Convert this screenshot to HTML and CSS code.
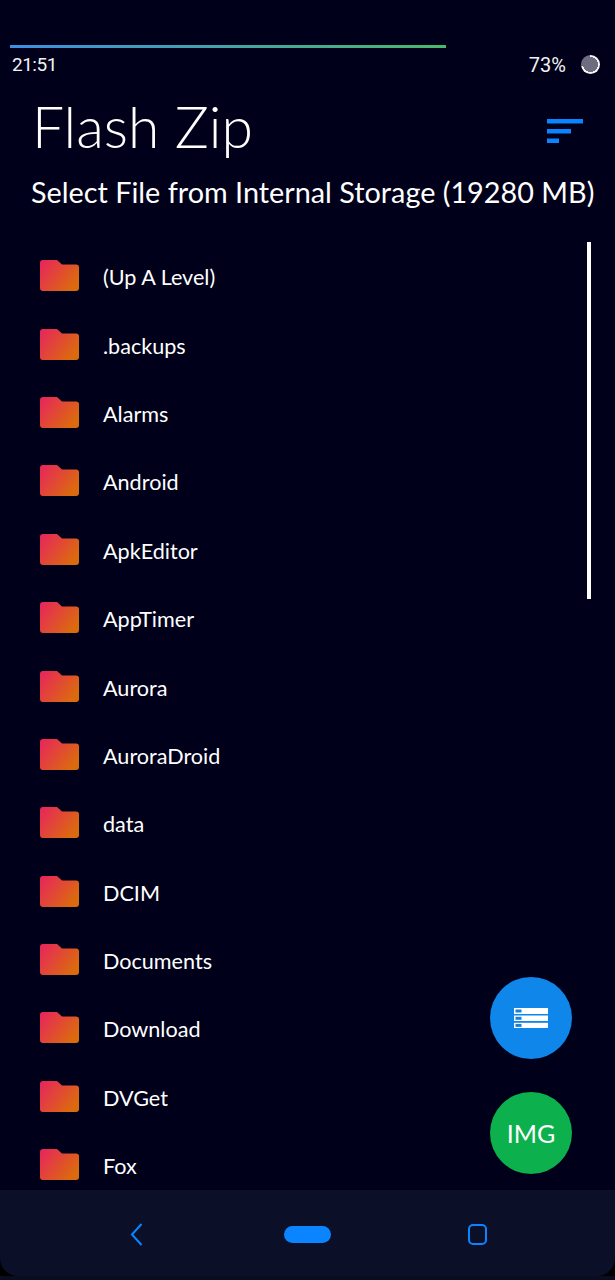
FILE: index.html
```html
<!DOCTYPE html>
<html lang="en">
<head>
<meta charset="utf-8">
<title>Flash Zip</title>
<link rel="stylesheet" href="styles.css">
</head>
<body>
<div class="screen">
  <div class="top-gap"></div>
  <div class="progress"></div>
  <div class="status">
    <span class="time">21:51</span>
    <div class="status-right">
      <span>73%</span>
      <span class="battery"></span>
    </div>
  </div>
  <header class="header">
    <h1 class="title">Flash Zip</h1>
    <svg class="sort" width="36" height="24" viewBox="0 0 36 24"><rect width="36" height="4.500" fill="#0a84ff"/><rect y="10" width="24" height="4.500" fill="#0a84ff"/><rect y="19.500" width="12" height="4.500" fill="#0a84ff"/></svg>
  </header>
  <h2 class="subtitle">Select File from Internal Storage (19280 MB)</h2>
  <main class="content">
    <svg width="0" height="0" class="defs"><defs><linearGradient id="fg" x1="0" y1="0" x2="1" y2="0.6"><stop offset="0" stop-color="#e8235f"/><stop offset="1" stop-color="#db6a0e"/></linearGradient></defs></svg>
    <ul class="list">
      <li class="row"><svg class="folder" viewBox="0 0 39 31"><path d="M3 0h14l5 4.500h14a3 3 0 0 1 3 3V28a3 3 0 0 1-3 3H3a3 3 0 0 1-3-3V3a3 3 0 0 1 3-3z" fill="url(#fg)"/></svg>(Up A Level)</li>
      <li class="row"><svg class="folder" viewBox="0 0 39 31"><path d="M3 0h14l5 4.500h14a3 3 0 0 1 3 3V28a3 3 0 0 1-3 3H3a3 3 0 0 1-3-3V3a3 3 0 0 1 3-3z" fill="url(#fg)"/></svg>.backups</li>
      <li class="row"><svg class="folder" viewBox="0 0 39 31"><path d="M3 0h14l5 4.500h14a3 3 0 0 1 3 3V28a3 3 0 0 1-3 3H3a3 3 0 0 1-3-3V3a3 3 0 0 1 3-3z" fill="url(#fg)"/></svg>Alarms</li>
      <li class="row"><svg class="folder" viewBox="0 0 39 31"><path d="M3 0h14l5 4.500h14a3 3 0 0 1 3 3V28a3 3 0 0 1-3 3H3a3 3 0 0 1-3-3V3a3 3 0 0 1 3-3z" fill="url(#fg)"/></svg>Android</li>
      <li class="row"><svg class="folder" viewBox="0 0 39 31"><path d="M3 0h14l5 4.500h14a3 3 0 0 1 3 3V28a3 3 0 0 1-3 3H3a3 3 0 0 1-3-3V3a3 3 0 0 1 3-3z" fill="url(#fg)"/></svg>ApkEditor</li>
      <li class="row"><svg class="folder" viewBox="0 0 39 31"><path d="M3 0h14l5 4.500h14a3 3 0 0 1 3 3V28a3 3 0 0 1-3 3H3a3 3 0 0 1-3-3V3a3 3 0 0 1 3-3z" fill="url(#fg)"/></svg>AppTimer</li>
      <li class="row"><svg class="folder" viewBox="0 0 39 31"><path d="M3 0h14l5 4.500h14a3 3 0 0 1 3 3V28a3 3 0 0 1-3 3H3a3 3 0 0 1-3-3V3a3 3 0 0 1 3-3z" fill="url(#fg)"/></svg>Aurora</li>
      <li class="row"><svg class="folder" viewBox="0 0 39 31"><path d="M3 0h14l5 4.500h14a3 3 0 0 1 3 3V28a3 3 0 0 1-3 3H3a3 3 0 0 1-3-3V3a3 3 0 0 1 3-3z" fill="url(#fg)"/></svg>AuroraDroid</li>
      <li class="row"><svg class="folder" viewBox="0 0 39 31"><path d="M3 0h14l5 4.500h14a3 3 0 0 1 3 3V28a3 3 0 0 1-3 3H3a3 3 0 0 1-3-3V3a3 3 0 0 1 3-3z" fill="url(#fg)"/></svg>data</li>
      <li class="row"><svg class="folder" viewBox="0 0 39 31"><path d="M3 0h14l5 4.500h14a3 3 0 0 1 3 3V28a3 3 0 0 1-3 3H3a3 3 0 0 1-3-3V3a3 3 0 0 1 3-3z" fill="url(#fg)"/></svg>DCIM</li>
      <li class="row"><svg class="folder" viewBox="0 0 39 31"><path d="M3 0h14l5 4.500h14a3 3 0 0 1 3 3V28a3 3 0 0 1-3 3H3a3 3 0 0 1-3-3V3a3 3 0 0 1 3-3z" fill="url(#fg)"/></svg>Documents</li>
      <li class="row"><svg class="folder" viewBox="0 0 39 31"><path d="M3 0h14l5 4.500h14a3 3 0 0 1 3 3V28a3 3 0 0 1-3 3H3a3 3 0 0 1-3-3V3a3 3 0 0 1 3-3z" fill="url(#fg)"/></svg>Download</li>
      <li class="row"><svg class="folder" viewBox="0 0 39 31"><path d="M3 0h14l5 4.500h14a3 3 0 0 1 3 3V28a3 3 0 0 1-3 3H3a3 3 0 0 1-3-3V3a3 3 0 0 1 3-3z" fill="url(#fg)"/></svg>DVGet</li>
      <li class="row"><svg class="folder" viewBox="0 0 39 31"><path d="M3 0h14l5 4.500h14a3 3 0 0 1 3 3V28a3 3 0 0 1-3 3H3a3 3 0 0 1-3-3V3a3 3 0 0 1 3-3z" fill="url(#fg)"/></svg>Fox</li>
    </ul>
    <div class="scrollbar"></div>
    <button class="fab fab-blue">
      <svg width="34" height="20" viewBox="0 0 34 20"><rect width="34" height="6" fill="#fff"/><rect y="7.500" width="34" height="5.500" fill="#fff"/><rect y="14.800" width="34" height="5.200" fill="#fff"/><rect x="1.500" y="1.500" width="6" height="3" fill="#1a7fd8"/><rect x="1.500" y="8.800" width="6" height="3" fill="#1a7fd8"/><rect x="1.500" y="15.900" width="6" height="3" fill="#1a7fd8"/></svg>
    </button>
    <button class="fab fab-green">IMG</button>
  </main>
  <nav class="nav">
    <svg class="nav-back" width="13" height="23" viewBox="0 0 13 23"><path d="M11.500 1 2 11.500 11.500 22" fill="none" stroke="#0a84ff" stroke-width="2"/></svg>
    <span class="nav-home"></span>
    <span class="nav-recent"></span>
  </nav>
</div>
</body>
</html>
```
FILE: styles.css
```css
* { box-sizing: border-box; }
html, body { margin: 0; padding: 0; background: #000; }
body {
  width: 615px;
  height: 1280px;
  overflow: hidden;
  font-family: "Lato", "Liberation Sans", sans-serif;
  color: #fff;
  background: linear-gradient(#000 1276px, #0a0c20 1276px);
}
.screen {
  width: 615px;
  height: 1276px;
  background: #00001a;
  display: flex;
  flex-direction: column;
  overflow: hidden;
  border-radius: 0 0 18px 18px;
}
.top-gap { height: 45px; flex: none; }
.progress {
  width: 436px;
  height: 3px;
  margin-left: 10px;
  flex: none;
  background: linear-gradient(90deg, #3f8fe0, #4cb86a);
}
.status {
  height: 33px;
  padding: 0 15px 0 12px;
  flex: none;
  display: flex;
  align-items: center;
  justify-content: space-between;
  font-family: "Roboto", sans-serif;
  font-size: 20px;
  color: #f2f2f2;
}
.time { font-size: 19px; letter-spacing: -0.5px; }
.status-right { display: flex; align-items: center; gap: 15px; }
.battery {
  width: 19px;
  height: 19px;
  border-radius: 50%;
  background:
    radial-gradient(circle closest-side, #6d6c80 78%, transparent 80%),
    conic-gradient(#f4f4f4 73%, #6d6c80 0);
}
.header {
  display: flex;
  align-items: center;
  justify-content: space-between;
  padding: 0 32px 0 32px;
  height: 90px;
  flex: none;
}
.title {
  margin: 0;
  font-size: 57px;
  font-weight: 300;
  line-height: 1;
}
.sort { margin-top: 10px; }
.subtitle {
  margin: 3px 0 0;
  padding-left: 31px;
  font-size: 28.800px;
  font-weight: 400;
  line-height: 36px;
  white-space: nowrap;
  flex: none;
}
.content {
  position: relative;
  flex: 1;
  min-height: 0;
  overflow: hidden;
}
.defs { position: absolute; }
.list {
  list-style: none;
  margin: 0;
  padding: 33px 0 0 40px;
}
.row {
  height: 68.400px;
  display: flex;
  align-items: center;
  gap: 24px;
  font-size: 21.600px;
}
.folder { width: 39px; height: 31px; flex: none; margin-top: -3px; }
.scrollbar {
  position: absolute;
  top: 32px;
  right: 24px;
  width: 4px;
  height: 357px;
  background: #fff;
}
.fab {
  position: absolute;
  right: 43px;
  width: 82px;
  height: 82px;
  border: 0;
  border-radius: 50%;
  padding: 0;
  color: #fff;
  display: flex;
  align-items: center;
  justify-content: center;
  font-family: inherit;
  font-size: 25px;
}
.fab-blue { top: 767px; background: #0f86ea; }
.fab-green { top: 882px; background: #0cb04c; }
.nav {
  height: 86px;
  flex: none;
  background: #0c0f28;
  display: flex;
  align-items: center;
  padding-top: 2px;
}
.nav-back { margin-left: 130px; }
.nav-home {
  width: 47px;
  height: 17px;
  margin-left: 141px;
  border-radius: 9px;
  background: #0a84ff;
}
.nav-recent {
  width: 19px;
  height: 21px;
  margin-left: 137px;
  border: 2px solid #0a84ff;
  border-radius: 5px;
}
```
